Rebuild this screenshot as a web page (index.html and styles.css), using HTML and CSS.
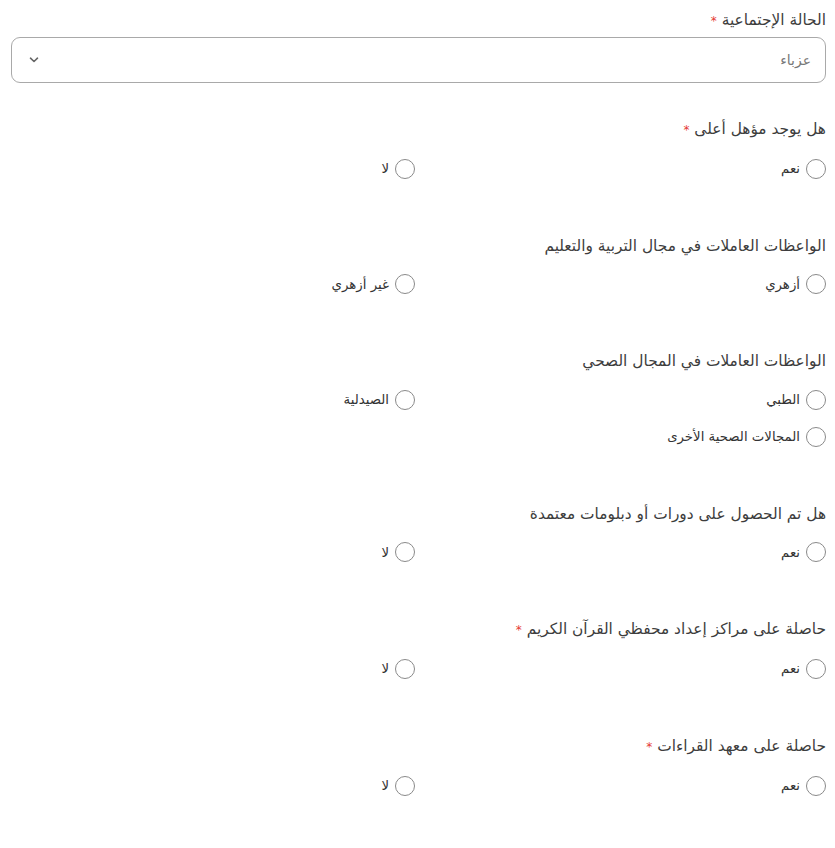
FILE: index.html
```html
<!DOCTYPE html>
<html lang="ar" dir="rtl">
<head>
  <meta charset="UTF-8">
  <title>استمارة البيانات</title>
  <link rel="stylesheet" href="styles.css">
</head>
<body>
  <form class="form">
    <div class="field field-select">
      <label class="field-label">الحالة الإجتماعية <span class="req">*</span></label>
      <div class="select">
        <span class="select-value">عزباء</span>
        <svg class="select-arrow" width="10" height="6" viewBox="0 0 10 6"><path d="M1.5 1.2 L5 4.5 L8.5 1.2" fill="none" stroke="#666" stroke-width="1.6" stroke-linecap="round" stroke-linejoin="round"/></svg>
      </div>
    </div>

    <div class="field">
      <div class="field-label">هل يوجد مؤهل أعلى <span class="req">*</span></div>
      <div class="options">
        <label class="option"><input type="radio" name="q1"><span>نعم</span></label>
        <label class="option"><input type="radio" name="q1"><span>لا</span></label>
      </div>
    </div>

    <div class="field">
      <div class="field-label">الواعظات العاملات في مجال التربية والتعليم</div>
      <div class="options">
        <label class="option"><input type="radio" name="q2"><span>أزهري</span></label>
        <label class="option"><input type="radio" name="q2"><span>غير أزهري</span></label>
      </div>
    </div>

    <div class="field">
      <div class="field-label">الواعظات العاملات في المجال الصحي</div>
      <div class="options">
        <label class="option"><input type="radio" name="q3"><span>الطبي</span></label>
        <label class="option"><input type="radio" name="q3"><span>الصيدلية</span></label>
        <label class="option"><input type="radio" name="q3"><span>المجالات الصحية الأخرى</span></label>
      </div>
    </div>

    <div class="field">
      <div class="field-label">هل تم الحصول على دورات أو دبلومات معتمدة</div>
      <div class="options">
        <label class="option"><input type="radio" name="q4"><span>نعم</span></label>
        <label class="option"><input type="radio" name="q4"><span>لا</span></label>
      </div>
    </div>

    <div class="field">
      <div class="field-label">حاصلة على مراكز إعداد محفظي القرآن الكريم <span class="req">*</span></div>
      <div class="options">
        <label class="option"><input type="radio" name="q5"><span>نعم</span></label>
        <label class="option"><input type="radio" name="q5"><span>لا</span></label>
      </div>
    </div>

    <div class="field">
      <div class="field-label">حاصلة على معهد القراءات <span class="req">*</span></div>
      <div class="options">
        <label class="option"><input type="radio" name="q6"><span>نعم</span></label>
        <label class="option"><input type="radio" name="q6"><span>لا</span></label>
      </div>
    </div>
  </form>
</body>
</html>
```

FILE: styles.css
```css
body {
  margin: 0;
  background: #fff;
  color: #3a3a3a;
  font-family: "DejaVu Sans", "Noto Sans", sans-serif;
  font-size: 14px;
}
.form {
  padding: 8px 9px 0 11px;
}
.field {
  margin-bottom: 53px;
}
.field-select {
  margin-bottom: 34px;
}
.field-label {
  display: block;
  line-height: 24px;
  margin-bottom: 14.6px;
  color: #3d3d3d;
  font-size: 15.4px;
}
.field-select .field-label {
  margin-bottom: 4px;
}
.req {
  color: #e53935;
  font-size: 12px;
}
.select {
  height: 46px;
  box-sizing: border-box;
  border: 1px solid #a9a9a9;
  border-radius: 9px;
  display: flex;
  align-items: center;
  justify-content: space-between;
  padding: 0 14px 0 17px;
}
.select-value {
  color: #777;
}
.select-arrow {
  display: block;
}
.options {
  display: grid;
  grid-template-columns: 1fr 1fr;
  column-gap: 7px;
  row-gap: 13px;
}
.option {
  display: flex;
  align-items: center;
  gap: 6px;
  height: 24px;
  color: #333;
  font-size: 13.3px;
}
.option input {
  appearance: none;
  -webkit-appearance: none;
  margin: 0;
  width: 20px;
  height: 20px;
  border: 1px solid #8a8a8a;
  border-radius: 50%;
  background: #fff;
  flex: none;
}
```
